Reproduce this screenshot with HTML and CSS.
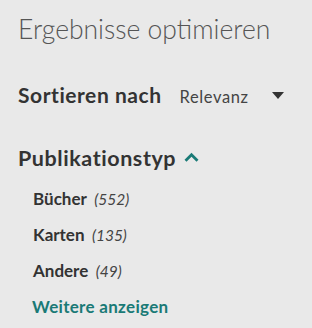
FILE: index.html
```html
<!DOCTYPE html>
<html lang="de">
<head>
<meta charset="utf-8">
<link rel="stylesheet" href="styles.css">
</head>
<body>
<aside class="panel">
  <h2 class="title">Ergebnisse optimieren</h2>
  <div class="sort">
    <span class="sort-label">Sortieren nach</span>
    <span class="sort-value">Relevanz</span>
    <svg class="caret" width="12" height="7" viewBox="0 0 12 7"><path d="M0 0H12L6 7Z" fill="#333"/></svg>
  </div>
  <div class="facet">
    <h3 class="facet-title">Publikationstyp
      <svg class="chev" width="15" height="10" viewBox="0 0 15 10"><path d="M1.5 8.8L7.5 2.8L13.5 8.8" fill="none" stroke="#1a7a76" stroke-width="2.8"/></svg>
    </h3>
    <ul class="facet-list">
      <li><span class="name">Bücher</span> <span class="count">(552)</span></li>
      <li><span class="name">Karten</span> <span class="count">(135)</span></li>
      <li><span class="name">Andere</span> <span class="count">(49)</span></li>
      <li><a class="more" href="#">Weitere anzeigen</a></li>
    </ul>
  </div>
</aside>
</body>
</html>
```
FILE: styles.css
```css
html, body { margin: 0; padding: 0; }
body {
  background: #e9e9e9;
  font-family: "Lato", "Noto Sans", sans-serif;
  color: #333;
  width: 312px;
  height: 328px;
  overflow: hidden;
}
.panel { padding: 13px 0 0 18px; }
.title {
  margin: 0;
  font-weight: 300;
  font-size: 26.5px;
  line-height: 32px;
  color: #555;
}
.sort {
  display: flex;
  align-items: baseline;
  margin-top: 38px;
  height: 24px;
  line-height: 24px;
}
.sort-label { font-weight: 700; font-size: 21px; letter-spacing: 0.55px; }
.sort-value { font-size: 16.5px; letter-spacing: 0.6px; margin-left: 18px; color: #444; }
.caret { align-self: flex-start; margin-left: 23px; margin-top: 9px; }
.facet { margin-top: 38px; }
.facet-title {
  margin: 0;
  font-size: 21.5px;
  font-weight: 700;
  letter-spacing: 0.57px;
  line-height: 26px;
  display: flex;
  align-items: center;
}
.chev { margin-left: 8px; margin-top: -2px; }
.facet-list { list-style: none; margin: 10px 0 0 15px; padding: 0; }
.facet-list li { font-size: 17px; line-height: 36px; height: 36px; }
.name { font-weight: 700; }
.count { font-size: 15.5px; font-style: italic; color: #444; margin-left: 3px; }
.more { color: #1a7a76; font-weight: 700; text-decoration: none; letter-spacing: 0.3px; margin-left: -1px; }
```
